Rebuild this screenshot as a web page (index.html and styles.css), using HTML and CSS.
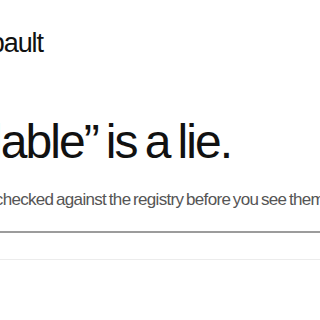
FILE: index.html
```html
<!DOCTYPE html>
<html lang="en">
<head>
<meta charset="utf-8">
<title>Snapault</title>
<link rel="stylesheet" href="styles.css">
</head>
<body>
<main class="page">
  <header class="brand">Snapault</header>
  <section class="hero">
    <h1 class="title">“Available” is a lie.</h1>
    <p class="lede">Every name is checked against the registry before you see them.</p>
    <div class="field"></div>
    <div class="rule"></div>
  </section>
</main>
</body>
</html>
```
FILE: styles.css
```css
html, body {
  margin: 0;
  padding: 0;
  background: #ffffff;
}
body {
  overflow: hidden;
  font-family: "Liberation Sans", Arial, Helvetica, sans-serif;
  color: #111111;
}
.page {
  width: 900px;
  padding-top: 30px;
  white-space: nowrap;
}
.brand {
  font-size: 27px;
  line-height: 1;
  letter-spacing: -0.04em;
  margin-left: -55px;
  color: #111111;
}
.hero {
  display: flex;
  flex-direction: column;
}
.title {
  margin: 61px 0 0 -107px;
  font-size: 48px;
  line-height: 1;
  font-weight: 400;
  letter-spacing: -0.04em;
  word-spacing: -0.07em;
  color: #111111;
}
.lede {
  margin: 24px 0 0 -104px;
  font-size: 17px;
  line-height: 1.2;
  letter-spacing: -0.04em;
  word-spacing: -0.08em;
  color: #555555;
}
.field {
  margin-top: 21px;
  height: 0;
  border-bottom: 2px solid #9c9c9c;
  width: 320px;
}
.rule {
  margin-top: 26px;
  height: 0;
  border-top: 1px solid #ececec;
  width: 320px;
}
```
